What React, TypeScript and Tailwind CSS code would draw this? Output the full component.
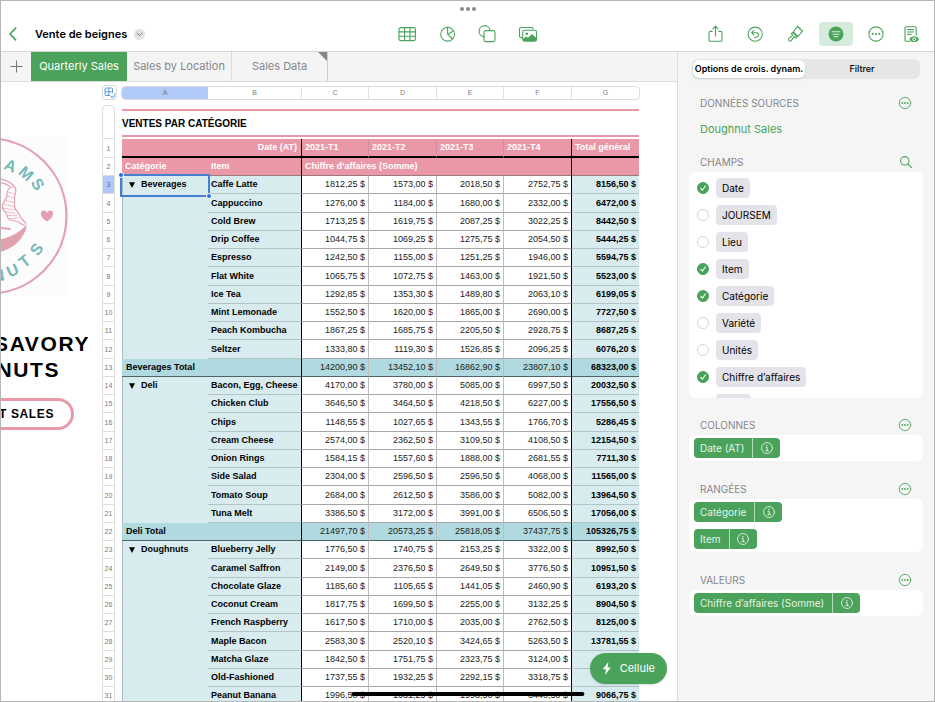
import { useState } from "react";
import type { ReactNode } from "react";

const COLUMNS = ["A", "B", "C", "D", "E", "F", "G"];

const QUARTERS = ["2021-T1", "2021-T2", "2021-T3", "2021-T4"];

type Item = { name: string; values: string[] };
type Group = { name: string; items: Item[]; total?: string[] };

const GROUPS: Group[] = [
  {
    name: "Beverages",
    items: [
      { name: "Caffe Latte", values: ["1812,25", "1573,00", "2018,50", "2752,75", "8156,50"] },
      { name: "Cappuccino", values: ["1276,00", "1184,00", "1680,00", "2332,00", "6472,00"] },
      { name: "Cold Brew", values: ["1713,25", "1619,75", "2087,25", "3022,25", "8442,50"] },
      { name: "Drip Coffee", values: ["1044,75", "1069,25", "1275,75", "2054,50", "5444,25"] },
      { name: "Espresso", values: ["1242,50", "1155,00", "1251,25", "1946,00", "5594,75"] },
      { name: "Flat White", values: ["1065,75", "1072,75", "1463,00", "1921,50", "5523,00"] },
      { name: "Ice Tea", values: ["1292,85", "1353,30", "1489,80", "2063,10", "6199,05"] },
      { name: "Mint Lemonade", values: ["1552,50", "1620,00", "1865,00", "2690,00", "7727,50"] },
      { name: "Peach Kombucha", values: ["1867,25", "1685,75", "2205,50", "2928,75", "8687,25"] },
      { name: "Seltzer", values: ["1333,80", "1119,30", "1526,85", "2096,25", "6076,20"] },
    ],
    total: ["14200,90", "13452,10", "16862,90", "23807,10", "68323,00"],
  },
  {
    name: "Deli",
    items: [
      { name: "Bacon, Egg, Cheese", values: ["4170,00", "3780,00", "5085,00", "6997,50", "20032,50"] },
      { name: "Chicken Club", values: ["3646,50", "3464,50", "4218,50", "6227,00", "17556,50"] },
      { name: "Chips", values: ["1148,55", "1027,65", "1343,55", "1766,70", "5286,45"] },
      { name: "Cream Cheese", values: ["2574,00", "2362,50", "3109,50", "4108,50", "12154,50"] },
      { name: "Onion Rings", values: ["1584,15", "1557,60", "1888,00", "2681,55", "7711,30"] },
      { name: "Side Salad", values: ["2304,00", "2596,50", "2596,50", "4068,00", "11565,00"] },
      { name: "Tomato Soup", values: ["2684,00", "2612,50", "3586,00", "5082,00", "13964,50"] },
      { name: "Tuna Melt", values: ["3386,50", "3172,00", "3991,00", "6506,50", "17056,00"] },
    ],
    total: ["21497,70", "20573,25", "25818,05", "37437,75", "105326,75"],
  },
  {
    name: "Doughnuts",
    items: [
      { name: "Blueberry Jelly", values: ["1776,50", "1740,75", "2153,25", "3322,00", "8992,50"] },
      { name: "Caramel Saffron", values: ["2149,00", "2376,50", "2649,50", "3776,50", "10951,50"] },
      { name: "Chocolate Glaze", values: ["1185,60", "1105,65", "1441,05", "2460,90", "6193,20"] },
      { name: "Coconut Cream", values: ["1817,75", "1699,50", "2255,00", "3132,25", "8904,50"] },
      { name: "French Raspberry", values: ["1617,50", "1710,00", "2035,00", "2762,50", "8125,00"] },
      { name: "Maple Bacon", values: ["2583,30", "2520,10", "3424,65", "5263,50", "13781,55"] },
      { name: "Matcha Glaze", values: ["1842,50", "1751,75", "2323,75", "3124,00", "9042,00"] },
      { name: "Old-Fashioned", values: ["1737,55", "1932,25", "2292,15", "3318,75", "9280,70"] },
      { name: "Peanut Banana", values: ["1996,50", "1631,25", "1998,50", "3440,50", "9066,75"] },
    ],
  },
];

const FIELDS = [
  { label: "Date", on: true },
  { label: "JOURSEM", on: false },
  { label: "Lieu", on: false },
  { label: "Item", on: true },
  { label: "Catégorie", on: true },
  { label: "Variété", on: false },
  { label: "Unités", on: false },
  { label: "Chiffre d’affaires", on: true },
  { label: "Coût", on: false },
];

/* ---------- icons ---------- */

function Icon({ size = 20, children }: { size?: number; children: ReactNode }) {
  return (
    <svg
      width={size}
      height={size}
      viewBox="0 0 20 20"
      fill="none"
      stroke="currentColor"
      strokeWidth="1.1"
      strokeLinecap="round"
      strokeLinejoin="round"
      aria-hidden="true"
    >
      {children}
    </svg>
  );
}

const TableIcon = () => (
  <Icon>
    <rect x="1" y="3.6" width="16.4" height="13" rx="1.8" />
    <path d="M1 7.9h16.4M1 12.2h16.4M6.600 3.6v13M12 3.6v13" />
  </Icon>
);

const ChartIcon = () => (
  <Icon>
    <circle cx="9.6" cy="10.2" r="6.9" />
    <path d="M9.6 3.4v6.8l5 4.8M9.6 10.2l6-3.2" />
  </Icon>
);

const ShapeIcon = () => (
  <Icon>
    <path d="M5.700 12.600A5.500 5.500 0 1 1 12 6.200" />
    <rect x="6" y="6.600" width="11" height="11" rx="1.8" />
  </Icon>
);

const MediaIcon = () => (
  <Icon>
    <path d="M4 13.6H3a1.5 1.5 0 0 1-1.500-1.500V5a1.500 1.500 0 0 1 1.500-1.500h10.500A1.500 1.500 0 0 1 15 5" />
    <rect x="4.700" y="6.300" width="13.800" height="10.800" rx="1.600" />
    <circle cx="8.800" cy="9.700" r="1.300" fill="currentColor" stroke="none" />
    <path d="M5 15l3.200-2.400 1.800 1.200 4-3.800 4.400 4v1.900a1 1 0 0 1-1 1H6a1 1 0 0 1-1-1z" fill="currentColor" stroke="none" />
  </Icon>
);

const ShareIcon = () => (
  <Icon>
    <path d="M7.200 7.400H5.300A1.300 1.300 0 0 0 4 8.700v7.200a1.300 1.300 0 0 0 1.300 1.300h10.400a1.300 1.300 0 0 0 1.300-1.300V8.700a1.300 1.300 0 0 0-1.300-1.300h-1.900M10.500 12V2.300M7.900 4.800l2.600-2.600 2.600 2.600" />
  </Icon>
);

const UndoIcon = () => (
  <Icon>
    <circle cx="10.200" cy="10.200" r="7.100" />
    <path d="M8.700 6.600 6.700 8.700l2 2.100M6.900 8.700h4.300a2.200 2.200 0 0 1 0 4.500H9.300" />
  </Icon>
);

const BrushIcon = () => (
  <Icon>
    <path d="M8.200 8 12.800 2.200l.9 1.700 1.300-.2-.1 1.600 2.700 1.500-4.700 5.700z" />
    <path d="M7.500 8.500l-1.200 1.400 1.600 1.500-3.900 2.900a1.600 1.600 0 0 0 2.300 2.300l3-3.900 1.600 1.300 1.300-1.300" />
    <path d="M7.500 8.500l4.700 4.200" />
  </Icon>
);

const OrganizeIcon = () => (
  <svg width="16" height="16" viewBox="0 0 16 16" aria-hidden="true">
    <circle cx="8" cy="8" r="7.500" fill="#4ba35b" />
    <path d="M4 5.800h8M5 8.200h6M6.300 10.600h3.400" stroke="#d5ecdd" strokeWidth="1.100" strokeLinecap="round" />
  </svg>
);

function MoreIcon({ size = 20 }: { size?: number }) {
  return (
    <Icon size={size}>
      <circle cx="10" cy="10" r="7.100" />
      <g fill="currentColor" stroke="none">
        <circle cx="6.700" cy="10" r="1.100" />
        <circle cx="10" cy="10" r="1.100" />
        <circle cx="13.300" cy="10" r="1.100" />
      </g>
    </Icon>
  );
}

const ReadIcon = () => (
  <Icon>
    <path d="M9 17.200H5.300A1.300 1.300 0 0 1 4 15.900V4a1.300 1.300 0 0 1 1.300-1.300h8.600A1.300 1.300 0 0 1 15.200 4v7.200M6.700 5.600h5.800M6.700 8h5.800M6.700 10.400h3.400" />
    <path d="M8.400 15.200c2.100-3.800 7.500-3.800 9.600 0-2.100 3.800-7.500 3.800-9.600 0z" fill="currentColor" stroke="none" />
    <circle cx="13.200" cy="15.200" r="1.500" fill="#4ba35b" stroke="#fff" strokeWidth=".9" />
  </Icon>
);

const SearchIcon = () => (
  <Icon size={14}>
    <circle cx="8.300" cy="8.300" r="6" strokeWidth="1.500" />
    <path d="m13 13 5 5" strokeWidth="1.700" />
  </Icon>
);

const InfoIcon = () => (
  <Icon size={14}>
    <circle cx="10" cy="10" r="7.800" strokeWidth="1.300" />
    <path d="M8.600 9h1.600v4.600M8.300 13.800h3.800" strokeWidth="1.400" />
    <circle cx="9.900" cy="6.300" r="1" fill="currentColor" stroke="none" />
  </Icon>
);

/* ---------- top bar ---------- */

function ToolButton({ label, children }: { label: string; children: ReactNode }) {
  return (
    <button type="button" aria-label={label} className="flex h-6 w-6 items-center justify-center">
      {children}
    </button>
  );
}

function Header() {
  return (
    <header className="relative grid h-[51px] shrink-0 grid-cols-[1fr_auto_1fr] items-end border-b border-[#d6d6d6] bg-white pb-[5px] text-[#4ba35b]">
      <div className="absolute left-1/2 top-[6px] flex -translate-x-1/2 gap-[2px]">
        <span className="h-1 w-1 rounded-full bg-[#8b8b8b]" />
        <span className="h-1 w-1 rounded-full bg-[#8b8b8b]" />
        <span className="h-1 w-1 rounded-full bg-[#8b8b8b]" />
      </div>

      <div className="flex h-6 items-center pl-[7px]">
        <button type="button" aria-label="Retour" className="mr-[17px]">
          <svg width="10" height="14" viewBox="0 0 10 14" fill="none" aria-hidden="true">
            <path d="M7.600 1.200 2 7l5.600 5.800" stroke="#4ba35b" strokeWidth="1.700" strokeLinecap="round" strokeLinejoin="round" />
          </svg>
        </button>
        <h1 className="text-[11px] font-semibold text-black">Vente de beignes</h1>
        <button
          type="button"
          aria-label="Options du document"
          className="ml-[7px] flex h-[11px] w-[11px] items-center justify-center rounded-full bg-[#e3e3e3]"
        >
          <svg width="7" height="5" viewBox="0 0 7 5" fill="none" aria-hidden="true">
            <path d="M1 1.200 3.500 3.700 6 1.200" stroke="#777" strokeWidth="1" strokeLinecap="round" />
          </svg>
        </button>
      </div>

      <div className="flex gap-4">
        <ToolButton label="Tableau"><TableIcon /></ToolButton>
        <ToolButton label="Graphique"><ChartIcon /></ToolButton>
        <ToolButton label="Figure"><ShapeIcon /></ToolButton>
        <ToolButton label="Média"><MediaIcon /></ToolButton>
      </div>

      <div className="flex justify-end gap-3 pr-[11px]">
        <div className="flex gap-4">
          <ToolButton label="Partager"><ShareIcon /></ToolButton>
          <ToolButton label="Annuler"><UndoIcon /></ToolButton>
          <ToolButton label="Format"><BrushIcon /></ToolButton>
        </div>
        <div className="flex gap-[11px]">
          <button
            type="button"
            aria-label="Organiser"
            className="flex h-6 w-[34px] items-center justify-center rounded bg-[#d5ecdd]"
          >
            <OrganizeIcon />
          </button>
          <ToolButton label="Plus"><MoreIcon /></ToolButton>
          <ToolButton label="Lecture"><ReadIcon /></ToolButton>
        </div>
      </div>
    </header>
  );
}

function SheetTabs() {
  return (
    <nav className="flex h-[30px] shrink-0 border-b border-[#dcdcdc] bg-[#f4f4f5] text-[11px] text-[#87878a]">
      <button type="button" aria-label="Ajouter une feuille" className="flex w-[30px] items-center justify-center">
        <svg width="13" height="13" viewBox="0 0 13 13" stroke="#77777a" strokeWidth="1" aria-hidden="true">
          <path d="M6.500 .5v12M.5 6.500h12" />
        </svg>
      </button>
      <button type="button" className="w-24 whitespace-nowrap bg-[#4ba35b] text-white">Quarterly Sales</button>
      <button type="button" className="w-[105px] whitespace-nowrap border-r border-[#dcdcdc]">Sales by Location</button>
      <button type="button" className="relative w-24 whitespace-nowrap border-r border-[#cfcfcf]">
        Sales Data
        <span className="absolute right-0 top-0 border-l-[9px] border-t-[9px] border-l-transparent border-t-[#85858a]" />
      </button>
    </nav>
  );
}

/* ---------- left canvas ---------- */

function DonutLogo() {
  return (
    <svg width="67" height="159" viewBox="1 137 67 159" className="bg-[#fdfcfc] tracking-normal" role="img" aria-label="Logo">
      <circle cx="-11" cy="216" r="77.500" fill="none" stroke="#e3a0af" strokeWidth="2.200" />
      <g fill="#74b8b7" fontFamily="Liberation Sans, sans-serif" fontWeight="700" fontSize="16" textAnchor="middle">
        <text transform="translate(-6 162.500) rotate(6)">H</text>
        <text transform="translate(8.300 170.800) rotate(23)">A</text>
        <text transform="translate(22.400 177.500) rotate(41)">M</text>
        <text transform="translate(33.100 187.300) rotate(57)">S</text>
        <text transform="translate(-.5 281) rotate(-10)">N</text>
        <text transform="translate(14.700 275.500) rotate(-24)">U</text>
        <text transform="translate(28 265.500) rotate(-39)">T</text>
        <text transform="translate(41 252.500) rotate(-55)">S</text>
      </g>
      <path d="M47 221.500c-3.500-2.400-6-4.700-6-7.300a3 3 0 0 1 6-1.200 3 3 0 0 1 6 1.200c0 2.600-2.500 4.900-6 7.300z" fill="#e3a0af" />
      {/* doughnut with its bite */}
      <g fill="none" stroke="#e3a0af" strokeWidth="1.200" strokeLinejoin="round">
        <path d="M0 179c5 .8 10 3 13.500 6.500 2.500 2.500 2.800 6 1.500 9-1.200 3 .2 5-.4 8-.6 3.500-.6 6.500 2.400 8.600 2.500 1.800 3 6.500 5.500 8.600 1 1 3 2 3.500 5" />
        <path d="M13.500 186.500c-5 1-7 5-6.500 9 .4 3-4.200 6-4.800 10.500-.5 4.600 4 5 4.800 9.500.8 4.200 4.800 5.500 8 5.500 3.500 0 5.500 3 10 4.700" />
        <path d="M0 182.500c3.600.5 7 1.700 10 4" />
        <path d="m7.500 192 6.500 1.800M7.300 196l6.500 1.700M5.500 200.500l8.500 1.700M3.500 204.500l10 2M3 208l11 2M4.500 211.500l11 1.800M7 215.500l10 .2M8.500 219l10.500-1.500" strokeWidth=".7" />
        <path d="M0 228 10.500 229" strokeWidth="2" />
      </g>
      <path d="M26 225.500C20 232 10 237.500 0 239.500v12.500c12-3 21-10.500 25.500-21.500 1-2 1.300-3.500.5-5z" fill="#e3a0af" />
    </svg>
  );
}

function Canvas() {
  return (
    <div className="flex w-[101px] shrink-0 flex-col overflow-hidden pt-[55px] font-['Liberation_Sans',sans-serif] font-bold tracking-widest text-black">
      <DonutLogo />
      <h2 className="mt-[35px] flex flex-col text-[21px] leading-[26px]">
        <span className="flex justify-end pr-3">SAVORY</span>
        <span className="flex justify-end pr-[42px]">NUTS</span>
      </h2>
      <div className="mr-[28px] mt-[15px] flex justify-end">
        <button
          type="button"
          className="flex h-8 shrink-0 items-center whitespace-nowrap rounded-full border-[3px] border-[#ea97a7] px-[17px] text-[12px] font-bold tracking-wider"
        >
          DONUT SALES
        </button>
      </div>
    </div>
  );
}

/* ---------- spreadsheet ---------- */

function ColumnBar() {
  return (
    <div className="mb-[5px] flex items-center">
      <button
        type="button"
        aria-label="Sélectionner le tableau"
        className="mr-[5px] flex h-[15px] w-[15px] items-center justify-center rounded-[3px] border border-[#d9d9de]"
      >
        <svg width="12" height="12" viewBox="0 0 12 12" fill="none" stroke="#5b9be6" strokeWidth="1" aria-hidden="true">
          <path d="M6 8.500H2A1 1 0 0 1 1 7.500V2a1 1 0 0 1 1-1h5.500a1 1 0 0 1 1 1v4M1 4.800h7.500M4.800 1v7.500" />
          <path d="M10.800 6.500v2.200a1.300 1.300 0 0 1-1.300 1.300H7.300M8.500 8.700 7.200 10l1.300 1.300" />
        </svg>
      </button>
      <div className="grid h-3 grid-cols-[86px_94px_67px_68px_67px_68px_67px] overflow-hidden rounded-[3px] text-center text-[7px] leading-3 text-[#7b7b80] outline-1 outline-[#dcdce0]">
        {COLUMNS.map((c) => (
          <span key={c} className={c === "A" ? "bg-[#b0c9f8]" : "border-r border-[#e0e0e3] last:border-r-0"}>
            {c}
          </span>
        ))}
      </div>
    </div>
  );
}

function RowNumber({ n }: { n: number }) {
  return (
    <>
      <th
        scope="row"
        className={`border-x border-b border-[#dededf] text-center text-[7px] font-normal ${n === 3 ? "bg-[#b0c9f8] text-[#56719f]" : "bg-white text-[#77777c]"}`}
      >
        {n}
      </th>
      <td className="bg-white" />
    </>
  );
}

function ValueCells({ values, total }: { values: string[]; total?: boolean }) {
  const line = total ? "border-b-[#4d6468]" : "border-b-[#a6a6a6]";
  return (
    <>
      {values.slice(0, 4).map((v, i) => (
        <td
          key={i}
          className={`border-b border-r pr-[3px] text-right text-[#222] ${line} ${i === 3 ? "border-r-black" : "border-r-[#bdbdbd]"} ${total ? "bg-[#b1dae0]" : "bg-white"}`}
        >
          {v} $
        </td>
      ))}
      <td className={`border-b pr-[3px] text-right font-bold ${total ? "border-b-[#4d6468] bg-[#b1dae0]" : "border-b-[#b3c4c7] bg-[#d8ecf0]"}`}>
        {values[4]} $
      </td>
    </>
  );
}

function PivotTable() {
  let row = 2;

  return (
    <table className="w-[537px] table-fixed border-separate border-spacing-0 text-[9px] leading-[17px] text-black">
      <colgroup>
        <col className="w-[13px]" />
        <col className="w-[7px]" />
        <col className="w-[86px]" />
        <col className="w-[94px]" />
        <col className="w-[67px]" />
        <col className="w-[68px]" />
        <col className="w-[67px]" />
        <col className="w-[68px]" />
        <col className="w-[67px]" />
      </colgroup>
      <thead className="text-left text-white">
        <tr>
          <RowNumber n={1} />
          <th colSpan={2} className="border-b-2 border-r border-black bg-[#ea97a7] pr-1 text-right">Date (AT)</th>
          {QUARTERS.map((q, i) => (
            <th
              key={q}
              className={`border-b-2 border-r border-b-black bg-[#ea97a7] pl-[3px] ${i === 3 ? "border-r-black" : "border-r-[#c9929c]"}`}
            >
              {q}
            </th>
          ))}
          <th className="whitespace-nowrap border-b-2 border-black bg-[#ea97a7] pl-[3px]">Total général</th>
        </tr>
        <tr>
          <RowNumber n={2} />
          <th className="border-b border-[#9b7a80] bg-[#ea97a7] pl-[3px]">Catégorie</th>
          <th className="border-b border-r border-b-[#9b7a80] border-r-black bg-[#ea97a7] pl-[3px]">Item</th>
          <th colSpan={4} className="border-b border-r border-b-[#9b7a80] border-r-black bg-[#ea97a7] pl-[3px]">
            Chiffre d’affaires (Somme)
          </th>
          <th className="border-b border-[#9b7a80] bg-[#ea97a7]" />
        </tr>
      </thead>
      <tbody className="[&>tr:nth-child(4n-2)]:h-[19px]">
        {GROUPS.map((g, gi) => {
          const rows = g.items.map((item, i) => {
            row += 1;
            return (
              <tr key={item.name}>
                <RowNumber n={row} />
                {i === 0 && (
                  <th
                    rowSpan={g.items.length}
                    className="relative border-l border-[#a9bcc0] bg-[#d8ecf0] pl-[6px] text-left align-top"
                  >
                    <span className="flex items-center gap-[6px]">
                      <svg width="6" height="6" viewBox="0 0 6 6" aria-hidden="true">
                        <path d="M0 .3h6L3 6z" />
                      </svg>
                      {g.name}
                    </span>
                    {gi === 0 && (
                      <span className="absolute -left-[3px] -top-[2px] z-10 h-[23px] w-[90px] border-2 border-[#457fcf]">
                        <span className="absolute -left-[4px] -top-[4px] h-[6px] w-[6px] rounded-full border border-white bg-[#2f6bdc]" />
                        <span className="absolute -bottom-[4px] -right-[4px] h-[6px] w-[6px] rounded-full border border-white bg-[#2f6bdc]" />
                      </span>
                    )}
                  </th>
                )}
                <th className="whitespace-nowrap border-b border-r border-b-[#b3c4c7] border-r-black bg-[#d8ecf0] pl-[3px] text-left">
                  {item.name}
                </th>
                <ValueCells values={item.values} />
              </tr>
            );
          });
          if (g.total) {
            row += 1;
            rows.push(
              <tr key={`${g.name}-total`}>
                <RowNumber n={row} />
                <th colSpan={2} className="border-b border-r border-b-[#4d6468] border-r-black bg-[#b1dae0] pl-1 text-left">
                  {g.name} Total
                </th>
                <ValueCells values={g.total} total />
              </tr>,
            );
          }
          return rows;
        })}
      </tbody>
    </table>
  );
}

function Sheet() {
  return (
    <div className="shrink-0 pt-[3px] font-['Liberation_Sans',sans-serif]">
      <ColumnBar />
      <div className="flex">
        <div className="h-[34px] w-[13px] rounded-t-[4px] border border-[#dededf] bg-white" />
        <div className="mb-[2px] ml-[7px] mt-1 flex flex-1 items-center border-y-2 border-[#ea97a7] text-[10px] font-bold text-black">
          VENTES PAR CATÉGORIE
        </div>
      </div>
      <PivotTable />
    </div>
  );
}

/* ---------- side panel ---------- */

function SectionTitle({ title, children }: { title: string; children: ReactNode }) {
  return (
    <div className="flex h-5 items-center justify-between pl-[11px] pr-[10px] text-[#4ba35b]">
      <h3 className="text-[10px] text-[#85858a]">{title}</h3>
      <button type="button" aria-label={title}>
        {children}
      </button>
    </div>
  );
}

function Chip({ label }: { label: string }) {
  return (
    <div className="flex h-5 w-fit overflow-hidden rounded bg-[#4ba35b] text-[10px] text-[#e4f3e7]">
      <button type="button" className="whitespace-nowrap pl-[6px] pr-2">{label}</button>
      <button type="button" aria-label={`Infos ${label}`} className="flex w-7 items-center justify-center border-l border-[#b5dabc]">
        <InfoIcon />
      </button>
    </div>
  );
}

function ChipSection({ title, chips }: { title: string; chips: string[] }) {
  return (
    <section>
      <SectionTitle title={title}>
        <MoreIcon size={16} />
      </SectionTitle>
      <div className="flex flex-col gap-[7px] rounded-md bg-white px-[5px] py-[3px]">
        {chips.map((c) => (
          <Chip key={c} label={c} />
        ))}
      </div>
    </section>
  );
}

function SidePanel() {
  const [fields, setFields] = useState(FIELDS);

  const toggle = (label: string) =>
    setFields(fields.map((f) => (f.label === label ? { ...f, on: !f.on } : f)));

  return (
    <aside className="w-[257px] shrink-0 border-l border-[#dcdcdc] bg-[#f5f5f6] px-[11px] pt-[7px]">
      <div className="mx-[3px] flex h-5 rounded-md bg-[#e5e7e6] p-px text-[9px] font-medium text-black">
        <button type="button" className="w-28 whitespace-nowrap rounded-md bg-white font-semibold shadow-sm">
          Options de crois. dynam.
        </button>
        <button type="button" className="flex-1">Filtrer</button>
      </div>

      <div className="mt-[14px]">
        <SectionTitle title="DONNÉES SOURCES">
          <MoreIcon size={16} />
        </SectionTitle>
        <a href="#doughnut-sales" className="mt-[6px] block pl-[11px] text-[11px] leading-5 text-[#4ba35b]">
          Doughnut Sales
        </a>
      </div>

      <div className="mt-[13px]">
        <SectionTitle title="CHAMPS">
          <SearchIcon />
        </SectionTitle>
        <ul className="flex h-[226px] flex-col gap-[7px] overflow-hidden rounded-md bg-white px-2 py-[6px]">
          {fields.map((f) => (
            <li key={f.label} className="h-5 shrink-0">
              <label className="flex h-5 items-center gap-[7px]">
                <span className="relative flex h-[12px] w-[12px]">
                  <input
                    type="checkbox"
                    checked={f.on}
                    onChange={() => toggle(f.label)}
                    className="h-[12px] w-[12px] appearance-none rounded-full border border-[#d4d4d8] bg-white checked:border-[#4ba35b] checked:bg-[#4ba35b]"
                  />
                  {f.on && (
                    <svg className="pointer-events-none absolute inset-0" width="12" height="12" viewBox="0 0 12 12" fill="none" aria-hidden="true">
                      <path d="m3.800 6.300 1.600 1.900 2.900-4.200" stroke="#fff" strokeWidth="1.100" strokeLinecap="round" />
                    </svg>
                  )}
                </span>
                <span className="flex h-5 items-center rounded bg-[#e4e3e9] px-[6px] text-[10px] text-black">{f.label}</span>
              </label>
            </li>
          ))}
        </ul>
      </div>

      <div className="mt-[17px] flex flex-col gap-[18px]">
        <ChipSection title="COLONNES" chips={["Date (AT)"]} />
        <ChipSection title="RANGÉES" chips={["Catégorie", "Item"]} />
        <ChipSection title="VALEURS" chips={["Chiffre d’affaires (Somme)"]} />
      </div>
    </aside>
  );
}

export default function App() {
  return (
    <div className="relative flex h-screen flex-col overflow-hidden border border-[#b5b5b5] bg-white font-['Inter',sans-serif]">
      <Header />
      <div className="flex min-h-0 flex-1">
        <main className="relative flex min-w-0 flex-1 flex-col">
          <SheetTabs />
          <div className="flex min-h-0 flex-1 overflow-hidden">
            <Canvas />
            <Sheet />
          </div>
          <button
            type="button"
            className="absolute bottom-[17px] right-[10px] z-20 flex h-[31px] items-center gap-2 rounded-full bg-[#4ba35b] px-3 text-[11px] text-white shadow-sm"
          >
            <svg width="10" height="13" viewBox="0 0 10 13" fill="currentColor" aria-hidden="true">
              <path d="M6.400 0 .8 7.200h3.300L2.900 13l6-7.400H5.500z" />
            </svg>
            Cellule
          </button>
        </main>
        <SidePanel />
      </div>
      <div className="absolute bottom-[5px] left-1/2 z-20 h-1 w-1/4 -translate-x-1/2 rounded-full bg-black" />
    </div>
  );
}
